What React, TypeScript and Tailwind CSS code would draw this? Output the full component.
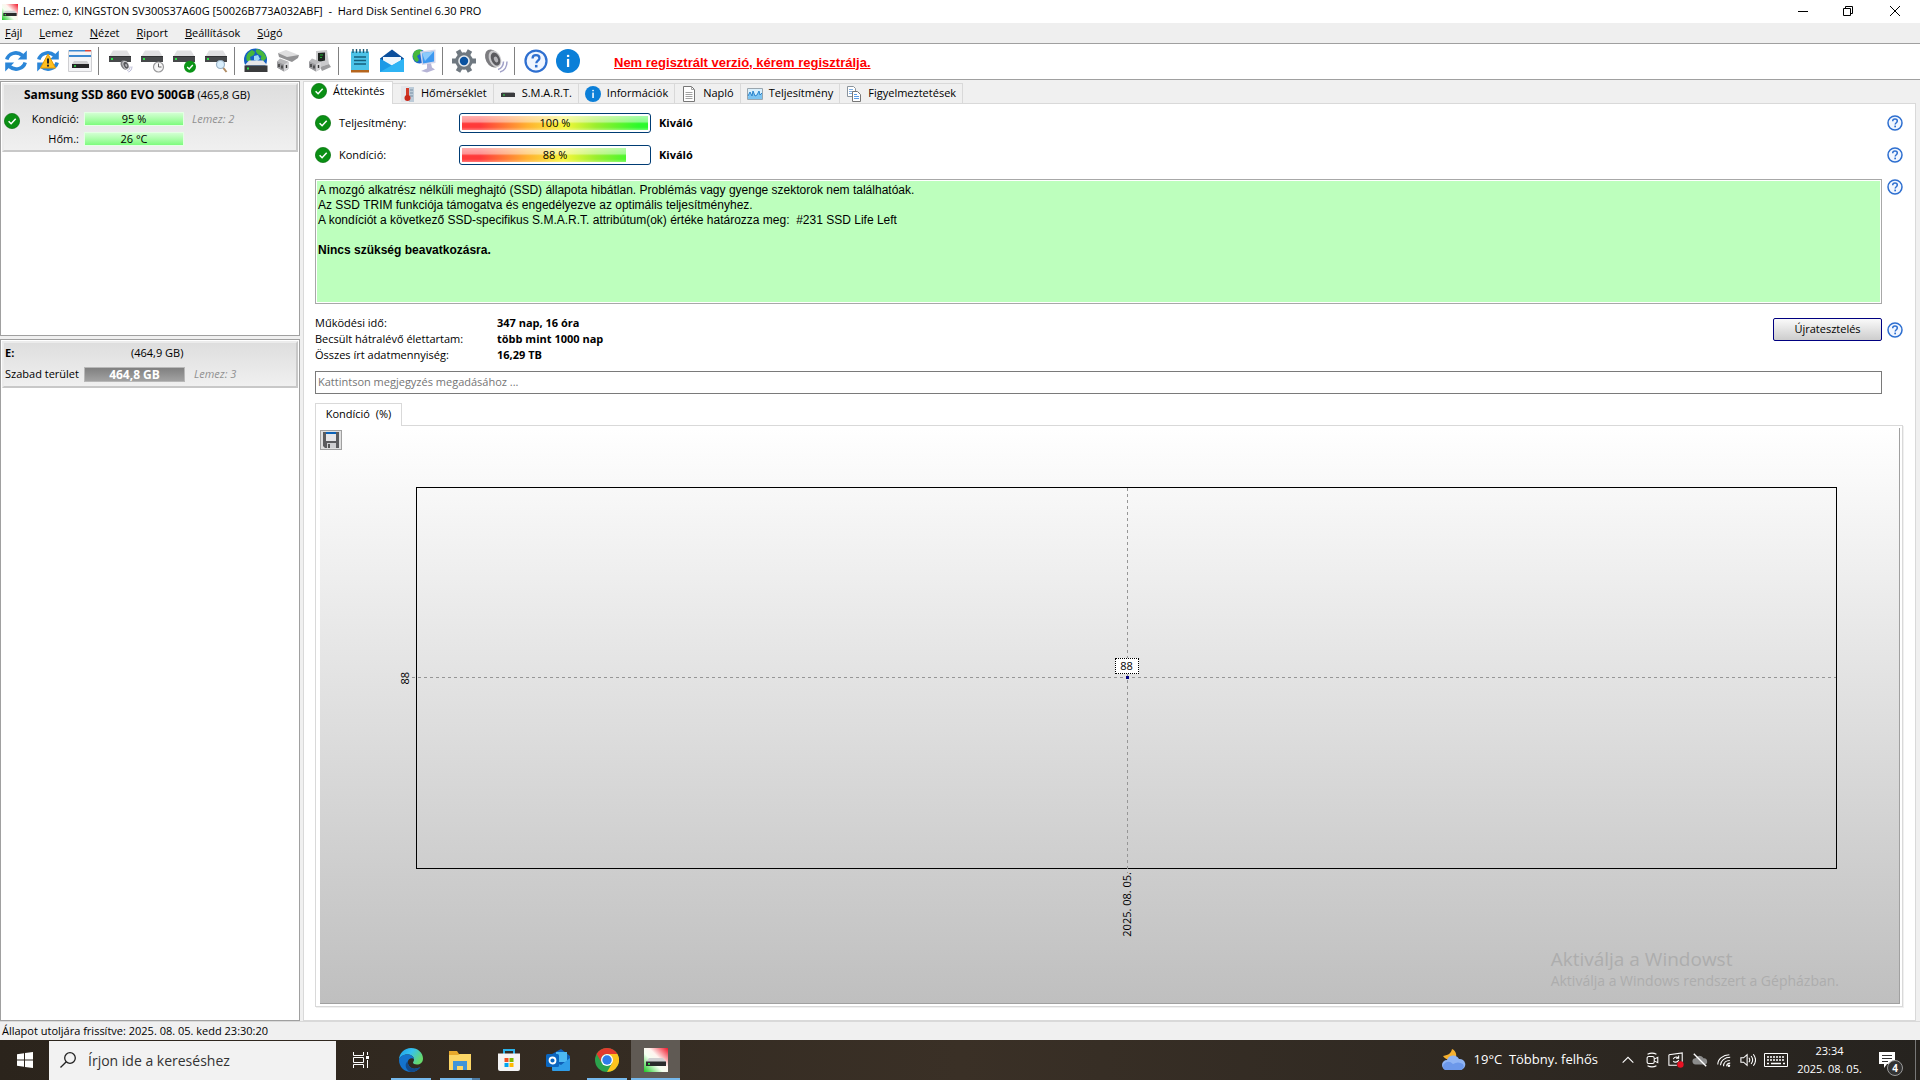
import type { ReactNode } from "react";

/* ---------- icons ---------- */

const CheckIcon = () => (
  <svg className="block size-4 shrink-0" viewBox="0 0 16 16">
    <circle cx="8" cy="8" r="7.6" fill="#0a8f14" stroke="#04700c" strokeWidth=".7" />
    <path d="M4.6 8.2l2.5 2.5 4.6-5" fill="none" stroke="#fff" strokeWidth="1.5" />
  </svg>
);

const HelpIcon = ({ className = "size-4" }: { className?: string }) => (
  <svg className={`block shrink-0 ${className}`} viewBox="0 0 16 16">
    <circle cx="8" cy="8" r="7" fill="#f1f6ff" stroke="#2e6fd0" strokeWidth="1.5" />
    <path
      d="M5.7 6.3c0-1.4.9-2.2 2.3-2.2s2.3.8 2.3 2c0 1.6-2.1 1.7-2.1 3.4"
      fill="none"
      stroke="#2e6fd0"
      strokeWidth="1.5"
    />
    <rect x="7.3" y="10.6" width="1.7" height="1.7" fill="#2e6fd0" />
  </svg>
);

const InfoIcon = ({ className = "size-4" }: { className?: string }) => (
  <svg className={`block shrink-0 ${className}`} viewBox="0 0 16 16">
    <circle cx="8" cy="8" r="8" fill="#0b7fd8" />
    <rect x="7.3" y="6.6" width="1.5" height="5.4" fill="#fff" />
    <rect x="7.2" y="3.8" width="1.7" height="1.6" rx=".8" fill="#fff" />
  </svg>
);

const AppIcon = ({ className = "size-4" }: { className?: string }) => (
  <svg className={`block shrink-0 ${className}`} viewBox="0 0 24 24">
    <defs>
      <linearGradient id="app-bg" x1="0" y1="1" x2="1" y2="0">
        <stop offset="0" stopColor="#16c81e" />
        <stop offset=".4" stopColor="#f4fff0" />
        <stop offset=".6" stopColor="#fff4f0" />
        <stop offset="1" stopColor="#f01428" />
      </linearGradient>
    </defs>
    <path d="M0 0h24v24H0z" fill="url(#app-bg)" />
    <path d="M5 10h14l3 4H2z" fill="#d0d0d2" />
    <path d="M2 13.5h20V18H2z" fill="#2a2a2c" />
    <path d="M4 15h2v1.8H4z" fill="#36e048" />
  </svg>
);

const Drive = () => (
  <>
    <path d="M5 1.5h14l4 6.5H1z" fill="#e0e0e2" />
    <path d="M1 7h22v6H1z" fill="#46484a" />
    <path d="M1 7h22v1H1z" fill="#303133" />
    <path d="M3 9h2v2H3z" fill="#2fe04a" />
  </>
);

const ToolSvg = ({ children }: { children: ReactNode }) => (
  <svg className="block size-6 overflow-visible" viewBox="0 0 24 24">
    {children}
  </svg>
);

const RefreshArrows = () => (
  <g fill="none" stroke="#2b86d8" strokeWidth="3.6">
    <path d="M2.8 10.5C4.5 4.5 12.5 1.5 18.5 6.5" />
    <path d="M21.2 13.5C19.5 19.5 11.5 22.5 5.5 17.5" />
    <path d="M22.8 1.5v9h-9zM1.2 22.5v-9h9z" fill="#2b86d8" stroke="none" />
  </g>
);

const SpeakerShape = () => (
  <>
    <ellipse cx="8.5" cy="9.5" rx="6.8" ry="9.6" transform="rotate(-28 8.5 9.5)" fill="#7c7c80" />
    <ellipse cx="11" cy="9.8" rx="5.8" ry="8.8" transform="rotate(-24 11 9.8)" fill="#c9c9cc" />
    <ellipse cx="11.5" cy="10" rx="4.3" ry="6.8" transform="rotate(-24 11.5 10)" fill="#5a5a5f" />
    <ellipse cx="12" cy="10.5" rx="1.9" ry="3" transform="rotate(-24 12 10.5)" fill="#b4b4b9" />
    <path d="M14 20.5c3-.5 5.500-4 5.500-8M16 23c4.500-1 7-5.500 7-10.500" fill="none" stroke="#a2a2c8" strokeWidth="1.5" />
  </>
);

const Usb = () => (
  <>
    <path d="M1 12.500l3-3 8 3v8l-4 2-7-4z" fill="#b9b9bb" />
    <path d="M1 12.500l7 3v7l-7-4z" fill="#9a9a9d" />
    <path d="M8 15.500l5-3v7l-5 3z" fill="#d4d4d6" />
    <path d="M3 15v3M6 16.500v3M10.500 16v3" stroke="#333" strokeWidth="1.4" />
  </>
);

const toolGroups: { label: string; icon: ReactNode }[][] = [
  [
    { label: "Frissítés", icon: <RefreshArrows /> },
    {
      label: "Frissítés most",
      icon: (
        <>
          <RefreshArrows />
          <path d="M12 5l7.5 14h-15z" fill="#ffc021" stroke="#e79a00" strokeLinejoin="round" />
          <path d="M12 9.500v5" stroke="#222" strokeWidth="2" />
          <circle cx="12" cy="16.7" r="1.1" fill="#222" />
        </>
      ),
    },
    {
      label: "Lemez ablak",
      icon: (
        <>
          <path d="M.5 1.500h23v21H.5z" fill="#f4f4f6" stroke="#cfcfd2" />
          <path d="M1 1h16v1.500H1zM1 6h22v2H1z" fill="#3b88d0" />
          <path d="M17 1h6v1.500h-6z" fill="#dd4636" />
          <path d="M6 12h13l2 3H4z" fill="#cfcfd1" />
          <path d="M4 15h17v4H4z" fill="#252527" />
          <path d="M6 16.200h2v1.500H6z" fill="#2fe04a" />
        </>
      ),
    },
  ],
  [
    {
      label: "Hangteszt",
      icon: (
        <>
          <Drive />
          <g transform="translate(12 11) scale(.52)">
            <SpeakerShape />
          </g>
        </>
      ),
    },
    {
      label: "Ütemezett teszt",
      icon: (
        <>
          <Drive />
          <circle cx="18.500" cy="18" r="5" fill="#f6f6f6" stroke="#9a9a9c" strokeWidth="1.2" />
          <path d="M18.500 14.500V18h3" fill="none" stroke="#666" />
        </>
      ),
    },
    {
      label: "Lemez teszt",
      icon: (
        <>
          <Drive />
          <circle cx="18" cy="17.8" r="6" fill="#0a9416" />
          <path d="M15.200 18l2 2 3.600-4" fill="none" stroke="#fff" strokeWidth="1.4" />
        </>
      ),
    },
    {
      label: "Felület teszt",
      icon: (
        <>
          <Drive />
          <path d="M19 18.500l3.500 4.500" stroke="#b08c64" strokeWidth="2" />
          <circle cx="16.500" cy="15.500" r="4" fill="#d8eefc" stroke="#9ab2c6" strokeWidth="1.2" />
        </>
      ),
    },
  ],
  [
    {
      label: "Online információ",
      icon: (
        <>
          <circle cx="11.500" cy="11" r="11.500" fill="#1560c4" />
          <path d="M3 12C1 7 4 3 8 1l3 2-1 3-4 2 1 4zM13 0c5 1 8 4 9.500 9l-3 3-3-2 1-3-4-2-2-3z" fill="#46b83c" />
          <path d="M10 7l4-1 2 4-3 2-3-1z" fill="#9cd8f8" />
          <path d="M5 11.500h14l4.500 5H.5z" fill="#e6e6e8" />
          <path d="M.5 16.500h23V23H.5z" fill="#3a3b3d" />
          <path d="M3 18.500h2v2H3z" fill="#2fe04a" />
        </>
      ),
    },
    {
      label: "Csatlakozás",
      icon: (
        <>
          <path d="M2 4l8-3 13 5-6 5-8-2z" fill="#dededf" />
          <path d="M2 4l9 4 12-2-1 3-6 4-13-5z" fill="#929294" />
          <Usb />
        </>
      ),
    },
    {
      label: "Kapcsolat",
      icon: (
        <>
          <path d="M8 2l11-1 2 14-9 3-4-5z" fill="#cacacc" />
          <path d="M10 4l7-.5v8L10 13z" fill="#1e2420" />
          <path d="M12 6h3M12 8.500h2" stroke="#1fae32" strokeWidth="1.2" />
          <path d="M12 18l9-3 2 3-9 4z" fill="#9c9c9e" />
          <Usb />
        </>
      ),
    },
  ],
  [
    {
      label: "Riport",
      icon: (
        <>
          <path d="M3 2.500h18V21H3z" fill="#4bc3e8" />
          <path d="M3 21h18v2.500H3z" fill="#b5651d" />
          <path d="M5 0v4M8.500 0v4M12 0v4M15.500 0v4M19 0v4" stroke="#1b5a74" strokeWidth="1.4" />
          <path d="M6 8h12M6 11.500h12M6 15h12" stroke="#14607c" strokeWidth="1.5" />
        </>
      ),
    },
    {
      label: "E-mail küldése",
      icon: (
        <>
          <path d="M0 9.500L12 .5l12 9V14H0z" fill="#0a4f9c" />
          <path d="M3 8h18v9H3z" fill="#eef6fc" />
          <path d="M0 9.500l12 7 12-7V23H0z" fill="#1c9ae6" />
          <path d="M0 23L24 9.500V23z" fill="#2fb4f4" />
        </>
      ),
    },
    {
      label: "Hálózat",
      icon: (
        <>
          <circle cx="7.500" cy="7.500" r="7" fill="#1b66cc" />
          <path d="M2 3c2-3 6-3 8-2L8 5 5 7l2 4-2 2C1 11 0 7 2 3z" fill="#46b83c" />
          <path d="M8 2.500L23.500.5V14L10 16z" fill="#d4d6ea" />
          <path d="M10 4l12-1.500v10L11 14.500z" fill="#3c98f0" />
          <path d="M10 4l12-1.500L13 12z" fill="#8ccafa" />
          <path d="M15 15l4-.5 1 4 3 2-8 3-6-1.500 6-2.500z" fill="#b6b4d6" />
        </>
      ),
    },
  ],
  [
    {
      label: "Beállítások",
      icon: (
        <>
          <circle cx="12" cy="12" r="8.7" fill="#6f7880" />
          <path d="M0 12h24M6 1.600l12 20.800M18 1.600L6 22.400" stroke="#6f7880" strokeWidth="5" />
          <circle cx="12" cy="12" r="5.8" fill="#e6eaee" />
          <circle cx="12" cy="12" r="4.2" fill="#0a52a0" />
        </>
      ),
    },
    { label: "Hang", icon: <SpeakerShape /> },
  ],
];

const ToolButton = ({ label, children }: { label: string; children: ReactNode }) => (
  <button aria-label={label} className="flex h-8 w-8 items-center justify-center">
    {children}
  </button>
);

const Separator = () => (
  <div className="flex w-2 justify-start pl-0.5">
    <div className="h-7 w-px bg-[#808080]" />
  </div>
);

const ThermoIcon = () => (
  <svg className="block size-4" viewBox="0 0 16 16">
    <path d="M2 0h8v16H2z" fill="#e4e6ea" />
    <path d="M10 1h5v15h-5z" fill="#bccbd8" />
    <path d="M11 4h3M11 7h3M11 10h3" stroke="#7890a4" />
    <path d="M7 2h3v8H7z" fill="#d23a28" />
    <circle cx="8.500" cy="12" r="3" fill="#c82a1c" />
  </svg>
);

const SmartIcon = () => (
  <svg className="block size-4" viewBox="0 0 16 16">
    <path d="M2 6h12l1 2H1z" fill="#a8a8aa" />
    <path d="M1 7h14v4H1z" fill="#3a3b3d" />
    <path d="M3 8.500h2v1H3z" fill="#2fe04a" />
  </svg>
);

const PageIcon = () => (
  <svg className="block size-4" viewBox="0 0 16 16">
    <path d="M2.500.5h8l3 3v12h-11z" fill="#fff" stroke="#777" />
    <path d="M10.500.5v3h3M4.500 6.500h7M4.500 8.500h7M4.500 10.500h7M4.500 12.500h7" fill="none" stroke="#a2a2a2" />
  </svg>
);

const GraphIcon = () => (
  <svg className="block size-4" viewBox="0 0 16 16">
    <path d="M.5 2.500h15v11H.5z" fill="#d9f0fd" stroke="#9aa6ae" />
    <path d="M1 11l2-5 2 4 1-5 2 5 2-1 2-4 1 4 2-2v6H1z" fill="#7cc4f2" />
    <path d="M1 10l2-4 2 4 1-5 2 5 2-1 2-4 1 4 2-2" fill="none" stroke="#2a84cc" />
  </svg>
);

const PagesIcon = () => (
  <svg className="block size-4" viewBox="0 0 16 16">
    <path d="M1.500.5h6l2 2v8h-8z" fill="#fff" stroke="#8b949c" />
    <path d="M3 3.500h4M3 5.500h4M3 7.500h3" stroke="#7fb0e4" />
    <path d="M6.500 5.500h5l3 3v7h-8z" fill="#fff" stroke="#777" />
    <path d="M8 8.500h3M8 10.500h5M8 12.500h5" stroke="#5a9ce6" />
  </svg>
);

/* ---------- data ---------- */

const menu = ["Fájl", "Lemez", "Nézet", "Riport", "Beállítások", "Súgó"];

const tabs: { label: string; icon: ReactNode }[] = [
  { label: "Hőmérséklet", icon: <ThermoIcon /> },
  { label: "S.M.A.R.T.", icon: <SmartIcon /> },
  { label: "Információk", icon: <InfoIcon /> },
  { label: "Napló", icon: <PageIcon /> },
  { label: "Teljesítmény", icon: <GraphIcon /> },
  { label: "Figyelmeztetések", icon: <PagesIcon /> },
];

const gauges = [
  { label: "Teljesítmény:", value: 100, verdict: "Kiváló" },
  { label: "Kondíció:", value: 88, verdict: "Kiváló" },
];

const facts = [
  ["Működési idő:", "347 nap, 16 óra"],
  ["Becsült hátralévő élettartam:", "több mint 1000 nap"],
  ["Összes írt adatmennyiség:", "16,29 TB"],
];

/* ---------- window chrome ---------- */

const TitleBar = () => (
  <header className="flex h-[23px] shrink-0 items-center bg-white pl-0.5">
    <AppIcon />
    <h1 className="ml-[5px] flex-1 whitespace-pre text-[11px]">
      {"Lemez: 0, KINGSTON SV300S37A60G [50026B773A032ABF]  -  Hard Disk Sentinel 6.30 PRO"}
    </h1>
    <button aria-label="Kis méret" className="flex h-full w-[45px] items-center justify-center pb-0.5">
      <svg className="size-[10px]" viewBox="0 0 10 10">
        <path d="M0 5.500h10" stroke="#000" />
      </svg>
    </button>
    <button aria-label="Előző méret" className="flex h-full w-[45px] items-center justify-center pb-0.5">
      <svg className="size-[10px]" viewBox="0 0 10 10" fill="none" stroke="#000">
        <path d="M.5 2.500h7v7h-7zM2.500 2.500v-2h7v7h-2" />
      </svg>
    </button>
    <button aria-label="Bezárás" className="flex h-full w-[50px] items-center justify-center pb-0.5">
      <svg className="size-[10px]" viewBox="0 0 10 10" stroke="#000">
        <path d="M0 0l10 10M10 0L0 10" />
      </svg>
    </button>
  </header>
);

const MenuBar = () => (
  <nav className="flex h-5 shrink-0 items-center gap-[17px] bg-[#efefef] pl-[5px] text-[11px]">
    {menu.map((item) => (
      <button key={item}>
        <span className="underline underline-offset-1">{item[0]}</span>
        {item.slice(1)}
      </button>
    ))}
  </nav>
);

const Toolbar = () => (
  <div className="flex h-[37px] shrink-0 items-center border-y border-[#a0a0a0] bg-white pb-px">
    {toolGroups.map((group, i) => (
      <div key={i} className="flex items-center">
        {group.map((tool) => (
          <ToolButton key={tool.label} label={tool.label}>
            <ToolSvg>{tool.icon}</ToolSvg>
          </ToolButton>
        ))}
        <Separator />
      </div>
    ))}
    <ToolButton label="Súgó">
      <HelpIcon className="size-6" />
    </ToolButton>
    <ToolButton label="Névjegy">
      <InfoIcon className="size-6" />
    </ToolButton>
    <a
      href="#register"
      className="mt-1 ml-[30px] font-['Liberation_Sans',Arial,sans-serif] text-[13px] font-bold text-[#f00] underline"
    >
      Nem regisztrált verzió, kérem regisztrálja.
    </a>
  </div>
);

/* ---------- left side ---------- */

const cardClass =
  "border-2 border-[#ececec] border-r-[#c8c8c8] border-b-[#c8c8c8] bg-gradient-to-b from-[#dedede] to-[#f0f0f0]";

const GreenBar = ({ children }: { children: ReactNode }) => (
  <div className="flex h-[14px] w-[100px] items-center justify-center border border-[#e4ffe4] bg-gradient-to-b from-[#d2ffd2] to-[#7dfb7d]">
    {children}
  </div>
);

const Sidebar = () => (
  <aside className="flex w-[300px] shrink-0 flex-col gap-[3px] text-[11px]">
    <section className="h-[255px] border border-[#a0a0a0] bg-white p-px">
      <div className={`h-[69px] ${cardClass}`}>
        <p className="pl-5 leading-5 whitespace-nowrap">
          <b className="text-[12px]">Samsung SSD 860 EVO 500GB</b> (465,8 GB)
        </p>
        <div className="mt-1.5 flex">
          <div className="flex w-5 items-center pb-4">
            <CheckIcon />
          </div>
          <dl className="grid grid-cols-[55px_100px] items-center gap-x-[5px] gap-y-1 leading-4">
            <dt className="text-right">Kondíció:</dt>
            <dd>
              <GreenBar>95 %</GreenBar>
            </dd>
            <dt className="text-right">Hőm.:</dt>
            <dd>
              <GreenBar>26 °C</GreenBar>
            </dd>
          </dl>
          <i className="ml-2 leading-4 text-[#909090]">Lemez: 2</i>
        </div>
      </div>
    </section>
    <section className="flex-1 border border-[#a0a0a0] bg-white p-px">
      <div className={`h-[47px] pl-px ${cardClass}`}>
        <p className="flex leading-5">
          <b className="w-[126px]">E:</b>(464,9 GB)
        </p>
        <div className="mt-1 flex h-[15px] items-center">
          <span className="w-[79px]">Szabad terület</span>
          <b className="flex h-[15px] w-[101px] items-center justify-center border border-[#b8b8b8] bg-gradient-to-b from-[#808080] to-[#a2a2a2] text-[12px] text-white">
            464,8 GB
          </b>
          <i className="ml-[9px] text-[#909090]">Lemez: 3</i>
        </div>
      </div>
    </section>
  </aside>
);

/* ---------- overview ---------- */

const Gauge = ({ value }: { value: number }) => (
  <div className="relative h-5 w-[192px] rounded-[3px] border border-[#003c74] bg-white p-0.5">
    <div className="h-full overflow-hidden" style={{ width: `${value}%` }}>
      <div className="h-full w-[186px] bg-[linear-gradient(180deg,rgba(255,255,255,.6),rgba(255,255,255,.45)_40%,transparent_55%,transparent_80%,rgba(255,255,255,.3)),linear-gradient(90deg,#ff3a3a_10%,#ffb030_35%,#f7f73a_55%,#9aee2e_72%,#2bfa2b_95%)]" />
    </div>
    <span className="absolute inset-0 flex items-center justify-center text-[11px]">{value} %</span>
  </div>
);

const HelpButton = () => (
  <button aria-label="Súgó">
    <HelpIcon />
  </button>
);

const Chart = () => (
  <div className="relative flex min-h-0 flex-1 border-r border-b border-[#a0a0a0] bg-gradient-to-b from-white to-[#bfbfbf] pt-[59px] pr-[62px] pb-[134px] pl-24">
    <button
      aria-label="Mentés"
      className="absolute top-0.5 left-0 flex h-5 w-[22px] items-center justify-center border border-[#a0a0a0] bg-[#e0e0e0]"
    >
      <svg className="size-4" viewBox="0 0 16 16">
        <path d="M0 0h16v16H2l-2-2z" fill="#5c5c5e" />
        <path d="M3 0h10v2H3z" fill="#0b62b8" />
        <path d="M3 2h10v7H3z" fill="#e6e6e8" />
        <path d="M4 11h9v5H4z" fill="#cfcfd1" />
        <path d="M5 12h2v4H5z" fill="#555" />
      </svg>
    </button>
    <div className="relative flex-1 border border-black">
      {/* crosshair through the single sample */}
      <div className="absolute top-1/2 right-0 -left-[5px] -mt-px h-px bg-[repeating-linear-gradient(90deg,#969696_0_3px,transparent_3px_6px)]" />
      <div className="absolute top-0 -bottom-[5px] left-1/2 w-px bg-[repeating-linear-gradient(180deg,#969696_0_3px,transparent_3px_6px)]" />
      <div className="absolute top-1/2 left-1/2 -mt-0.5 -ml-px size-[3px] bg-[#000080]" />
      <div className="absolute top-1/2 left-1/2 -mt-5 -ml-3 flex h-4 w-6 items-center justify-center border border-dotted border-black bg-white text-[11px]">
        88
      </div>
      <div className="absolute top-1/2 -left-5 flex h-0 items-center">
        <span className="rotate-180 text-[11px] leading-4 [writing-mode:vertical-rl]">88</span>
      </div>
      <div className="absolute top-full left-1/2 mt-1 flex w-0 justify-center">
        <span className="rotate-180 text-[11px] leading-4 whitespace-pre [writing-mode:vertical-rl]">
          2025. 08. 05.
        </span>
      </div>
    </div>
    <div className="absolute right-[60px] bottom-3 text-[#adadad]">
      <p className="text-[19px] leading-6">Aktiválja a Windowst</p>
      <p className="text-[14px] leading-5">Aktiválja a Windows rendszert a Gépházban.</p>
    </div>
  </div>
);

const Overview = () => (
  <main className="mr-1 flex min-h-0 flex-1 flex-col border border-[#d9d9d9] bg-white pt-[9px] pr-3 pb-[13px] pl-[11px] text-[11px]">
    {gauges.map((gauge) => (
      <div key={gauge.label} className="mb-3 flex h-5 items-center">
        <CheckIcon />
        <span className="ml-2 w-[120px]">{gauge.label}</span>
        <Gauge value={gauge.value} />
        <b className="ml-2 flex-1">{gauge.verdict}</b>
        <HelpButton />
      </div>
    ))}
    <div className="mt-0.5 flex shrink-0 items-start gap-[5px]">
      <div className="h-[125px] flex-1 border border-[#a8a8a8] bg-[#bdffbd] px-0.5 pt-[3px] font-['Liberation_Sans',Arial,sans-serif] text-[12px] leading-[15px] shadow-[inset_0_0_0_1px_#fff]">
        <p>A mozgó alkatrész nélküli meghajtó (SSD) állapota hibátlan. Problémás vagy gyenge szektorok nem találhatóak.</p>
        <p>Az SSD TRIM funkciója támogatva és engedélyezve az optimális teljesítményhez.</p>
        <p className="whitespace-pre">
          {"A kondíciót a következő SSD-specifikus S.M.A.R.T. attribútum(ok) értéke határozza meg:  #231 SSD Life Left"}
        </p>
        <p className="mt-[15px] font-bold">Nincs szükség beavatkozásra.</p>
      </div>
      <HelpButton />
    </div>
    <div className="mt-[11px] flex items-start justify-between">
      <dl className="grid grid-cols-[182px_auto] leading-4">
        {facts.map(([name, value]) => (
          <div key={name} className="contents">
            <dt>{name}</dt>
            <dd className="font-bold">{value}</dd>
          </div>
        ))}
      </dl>
      <div className="mt-[3px] flex items-center gap-[5px]">
        <button className="h-[23px] w-[109px] rounded-[2px] border border-[#000080] bg-gradient-to-b from-[#fafafa] to-[#cdcdcd]">
          Újratesztelés
        </button>
        <HelpButton />
      </div>
    </div>
    <input
      aria-label="Megjegyzés"
      placeholder="Kattintson megjegyzés megadásához ..."
      className="mt-2 mr-[21px] h-[23px] shrink-0 border border-[#7a7a7a] px-0.5 pb-0.5 placeholder:text-[#757575]"
    />
    <div className="mt-[9px] flex h-[22px] shrink-0">
      <button className="relative z-10 -mb-px w-[87px] whitespace-pre border border-b-0 border-[#d9d9d9] bg-white pb-0.5">
        {"Kondíció  (%)"}
      </button>
    </div>
    <section className="flex min-h-0 flex-1 flex-col border border-[#d9d9d9] pt-0.5 pr-0.5 pb-0.5 pl-1 shadow-[1px_1px_0_#f0f0f0]">
      <Chart />
    </section>
  </main>
);

const TabStrip = () => (
  <div className="flex h-[22px] shrink-0 items-end text-[11px]">
    <button className="relative z-10 -mb-px flex h-[23px] w-[90px] items-center border border-b-0 border-[#d9d9d9] bg-white pb-1 pl-[7px] whitespace-nowrap">
      <CheckIcon />
      <span className="ml-1.5">Áttekintés</span>
    </button>
    {tabs.map((tab) => (
      <button
        key={tab.label}
        className="flex h-5 items-center gap-1.5 border-t border-r border-[#d9d9d9] px-1.5 whitespace-nowrap"
      >
        {tab.icon}
        {tab.label}
      </button>
    ))}
  </div>
);

/* ---------- taskbar ---------- */

const EdgeIcon = () => (
  <svg className="size-6" viewBox="0 0 24 24">
    <defs>
      <linearGradient id="edge-top" x1="0" y1="0" x2="1" y2=".5">
        <stop offset="0" stopColor="#1b9de2" />
        <stop offset=".5" stopColor="#35c1f1" />
        <stop offset="1" stopColor="#66d96c" />
      </linearGradient>
    </defs>
    <path d="M12 0c7 0 12 5 12 10.500 0 4-3 6-6 6-2.500 0-4-1-4-2 0-.8 1-1 1-3 0-3-3-5-6.500-5C4 6.500.5 9 0 12 0 5 5.500 0 12 0z" fill="url(#edge-top)" />
    <path d="M0 12c.5-3.500 4-5.500 8.500-5.500 3.500 0 6.500 2 6.500 5-1-2-5-2-6 1.500-1 4 3 8.500 8 7.500 2-.3 3.500-1 4.500-1.500-2 3-5.500 5-9.500 5C5 24 0 18.500 0 12z" fill="#1473cc" />
    <path d="M9 13c-1 4 3 8.500 8 7.500 2-.3 3.500-1 4.500-1.500-2 3-5.500 5-9.500 5C8 23 4 17 9 13z" fill="#114a8b" />
  </svg>
);

const FolderIcon = () => (
  <svg className="size-6" viewBox="0 0 24 24">
    <path d="M1 3h8l2 3h12v16H1z" fill="#e8a92c" />
    <path d="M1 7h9l2-1h11v16H1z" fill="#fcd666" />
    <path d="M5 13h14v9h-4v-4H9v4H5z" fill="#3f94d8" />
  </svg>
);

const StoreIcon = () => (
  <svg className="size-6" viewBox="0 0 24 24">
    <path d="M7 6V2h10v4" fill="none" stroke="#2bb3ea" strokeWidth="2" />
    <path d="M1 5.500h22V21q0 2-2 2H3q-2 0-2-2z" fill="#f4f4f4" />
    <path d="M7.500 10h4v4h-4z" fill="#f25022" />
    <path d="M12.500 10h4v4h-4z" fill="#7fba00" />
    <path d="M7.500 15h4v4h-4z" fill="#00a4ef" />
    <path d="M12.500 15h4v4h-4z" fill="#ffb900" />
  </svg>
);

const OutlookIcon = () => (
  <svg className="size-6" viewBox="0 0 24 24">
    <path d="M6 6l9-5 9 7v14H6z" fill="#0f5fb8" />
    <path d="M10 4h11v10H10z" fill="#4db8f2" />
    <path d="M6 13l9 4 9-7v12q0 1-1 1H7q-1 0-1-1z" fill="#2f9de8" />
    <rect y="6" width="13" height="13" rx="1.500" fill="#0a66c0" />
    <circle cx="6.500" cy="12.500" r="3" fill="none" stroke="#fff" strokeWidth="1.800" />
  </svg>
);

const ChromeIcon = () => (
  <svg className="size-6" viewBox="0 0 24 24">
    <circle cx="12" cy="12" r="12" fill="#2ba24c" />
    <path d="M22.400 6A12 12 0 0 1 12 24l5.200-9L12 6z" fill="#fcc31e" />
    <path d="M1.600 6A12 12 0 0 1 22.400 6H12a6 6 0 0 0-5.200 9z" fill="#e33b2e" />
    <circle cx="12" cy="12" r="6" fill="#fff" />
    <circle cx="12" cy="12" r="4.700" fill="#2f7de8" />
  </svg>
);

const apps: { name: string; icon: ReactNode; bar: string; active?: boolean }[] = [
  { name: "Microsoft Edge", icon: <EdgeIcon />, bar: "w-10 bg-[#76b9ed]" },
  { name: "Fájlkezelő", icon: <FolderIcon />, bar: "w-10 border-r-8 border-[#4d7ba3] bg-[#76b9ed]" },
  { name: "Microsoft Store", icon: <StoreIcon />, bar: "" },
  { name: "Outlook", icon: <OutlookIcon />, bar: "" },
  { name: "Google Chrome", icon: <ChromeIcon />, bar: "w-10 bg-[#76b9ed]" },
  { name: "Hard Disk Sentinel", icon: <AppIcon className="size-6" />, bar: "w-full bg-[#76b9ed]", active: true },
];

const TrayButton = ({ label, children }: { label: string; children: ReactNode }) => (
  <button aria-label={label} className="flex h-full w-6 items-center justify-center">
    <svg className="size-4" viewBox="0 0 18 18" fill="none" stroke="#fff" strokeWidth="1.2">
      {children}
    </svg>
  </button>
);

const Tray = () => (
  <>
    <TrayButton label="Rejtett ikonok">
      <path d="M3 12l6-6 6 6" />
    </TrayButton>
    <TrayButton label="Kamera">
      <rect x="3.500" y="5" width="8" height="8" rx="2" />
      <path d="M11.500 8l4-2v6l-4-2M4 2.500q5-2.500 10 0M4 15.500q5 2.500 10 0" />
    </TrayButton>
    <TrayButton label="Frissítés állapota">
      <path d="M1 3l15-2v10M1 3v12h9M6 8c1-3 5-3 6-1M12 4v3H9M12 9c-1 3-5 3-6 1" />
      <circle cx="14" cy="14" r="3.600" fill="#e81123" stroke="none" />
    </TrayButton>
    <TrayButton label="OneDrive">
      <path d="M4 14a3.500 3.500 0 0 1 0-7 5 5 0 0 1 9 0 3.500 3.500 0 0 1 1 7z" fill="#8c8c8c" stroke="none" />
      <path d="M2 2l14 14" strokeWidth="1.500" />
    </TrayButton>
    <TrayButton label="Hálózat">
      <path d="M2 14C2 8 8 3 15 3M5 15c0-5 5-9 11-9M8.500 16c0-4 3-6.500 7-6.500M12 16c0-2 1.500-3.500 4-3.500" />
      <circle cx="14.500" cy="15.500" r="1.500" fill="#fff" stroke="none" />
    </TrayButton>
    <TrayButton label="Hangerő">
      <path d="M1 6.500h3l4-3.500v12l-4-3.500H1zM10 6.500q2 2.500 0 5M12.500 4.500q3.500 4.500 0 9M15 2.500q5 6.500 0 13" />
    </TrayButton>
    <button aria-label="Billentyűzet" className="flex h-full w-8 items-center justify-center">
      <svg className="h-[14px] w-6" viewBox="0 0 24 14" fill="none" stroke="#fff">
        <path d="M.5.5h23v13H.5z" />
        <path d="M3 4h18M3 7h18" strokeDasharray="2 1" strokeWidth="1.500" />
        <path d="M3 10.500h2M7 10.500h10M19 10.500h2" strokeWidth="1.500" />
      </svg>
    </button>
  </>
);

const Taskbar = () => (
  <footer className="flex h-10 shrink-0 items-center bg-gradient-to-r from-[#2b241c] via-[#3a3026] to-[#26231f] text-white">
    <button aria-label="Start" className="flex h-full w-[49px] items-center justify-center">
      <svg className="size-4" viewBox="0 0 16 16" fill="#fff">
        <path d="M0 2.200l7-1v6.300H0zM8 1l8-1v7.500H8zM0 8.500h7v6.300l-7-1zM8 8.500h8V16l-8-1z" />
      </svg>
    </button>
    <label className="flex h-[39px] w-[287px] items-center bg-[#f2f2f2] pl-[11px]">
      <svg className="size-4" viewBox="0 0 16 16" fill="none" stroke="#222" strokeWidth="1.300">
        <circle cx="10" cy="6" r="5.300" />
        <path d="M6.300 9.700L.5 15.500" />
      </svg>
      <input
        aria-label="Keresés"
        placeholder="Írjon ide a kereséshez"
        className="ml-3 w-[200px] bg-transparent text-[14px] text-black placeholder:text-[#333]"
      />
    </label>
    <button aria-label="Feladatnézet" className="flex h-full w-[50px] items-center justify-center">
      <svg className="size-4" viewBox="0 0 16 16" fill="none" stroke="#fff">
        <path d="M.5 0v3.500h10V0M.5 5.500h10v5H.5zM.5 16v-3.500h10V16M14.500 0v3M14.500 8v8" />
        <path d="M13 4h3v3h-3z" fill="#fff" stroke="none" />
      </svg>
    </button>
    {apps.map((app) => (
      <button
        key={app.name}
        aria-label={app.name}
        className={`relative flex h-full w-[49px] items-center justify-center ${app.active ? "bg-[#605a54]" : ""}`}
      >
        {app.icon}
        <span className={`absolute bottom-0 h-0.5 ${app.bar}`} />
      </button>
    ))}
    <div className="flex-1" />
    <button className="mr-[18px] flex items-center text-[13px] whitespace-pre">
      <svg className="mr-2 size-6" viewBox="0 0 24 24">
        <path d="M10 1c-1 4-3 6-9 7 2 4 10 6 13 1 1-3-1-7-4-8z" fill="#f5b02e" />
        <path d="M5 22a5 5 0 0 1 0-10 6.500 6.500 0 0 1 12-1 5.600 5.600 0 0 1 2 11z" fill="#8fb4f4" />
        <path d="M3 22a4 4 0 0 1 0-7q4-3 8 1 5-3 10 0a4 4 0 0 1-2 6z" fill="#6c98ea" />
      </svg>
      {"19°C  Többny. felhős"}
    </button>
    <Tray />
    <div className="w-[75px] text-center text-[11px] leading-[18px]">
      <p>23:34</p>
      <p>2025. 08. 05.</p>
    </div>
    <button aria-label="Értesítések" className="relative flex h-full w-12 items-center justify-center">
      <svg className="mr-2 size-4" viewBox="0 0 16 16">
        <path d="M0 0h16v12H8l-3 4v-4H0z" fill="#fff" />
        <path d="M3 3.500h10M3 6.500h10M3 9.500h6" stroke="#333" />
      </svg>
      <span className="absolute right-3 bottom-1 flex size-4 items-center justify-center rounded-full border border-[#9a9a9a] bg-[#333] text-[10px] font-bold">
        4
      </span>
    </button>
    <button aria-label="Asztal megjelenítése" className="h-full w-[5px] border-l border-[#777]" />
  </footer>
);

export default function App() {
  return (
    <div className="flex h-screen flex-col overflow-hidden bg-[#f0f0f0] font-['Open_Sans','Segoe_UI',sans-serif] text-black">
      <TitleBar />
      <MenuBar />
      <Toolbar />
      <div className="flex min-h-0 flex-1 gap-[3px] pt-px">
        <Sidebar />
        <div className="flex min-w-0 flex-1 flex-col">
          <TabStrip />
          <Overview />
        </div>
      </div>
      <div className="h-[19px] shrink-0 border-t border-[#d9d9d9] pl-0.5 text-[11px] leading-[18px]">
        Állapot utoljára frissítve: 2025. 08. 05. kedd 23:30:20
      </div>
      <Taskbar />
    </div>
  );
}
